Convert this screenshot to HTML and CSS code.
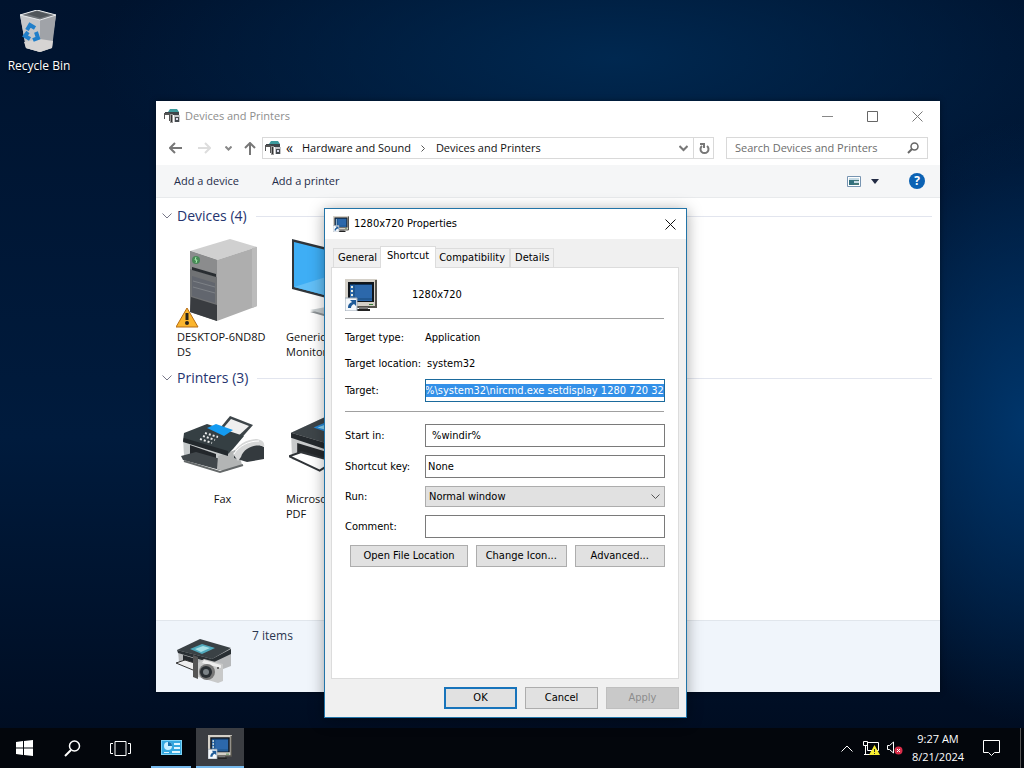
FILE: index.html
```html
<!DOCTYPE html>
<html lang="en">
<head>
<meta charset="utf-8">
<title>Devices and Printers</title>
<link rel="stylesheet" href="styles.css">
</head>
<body>
<svg class="defs" aria-hidden="true">
  <symbol id="devices" viewBox="0 0 16 14">
    <path d="M4 3 6 0h7l2 3z" fill="#3c9a9d"/><path d="M1 3h14v3H1z" fill="#3d4449"/><path d="M0 4h6v8H5V6H1v4H0z" fill="#555"/><path d="M6 5h3v9H6z" fill="#9a9a9a"/><path d="M7 6h1v7H7z" fill="#333"/><path d="M10 6h6v7h-6z" fill="#c4c6c8"/><path d="M11 8h4v5h-4z" fill="#454b50"/><path d="M12 9h2v2h-2z" fill="#dde"/>
  </symbol>
  <symbol id="console" viewBox="0 0 32 32">
    <path d="M0 0h32v28H0z" fill="#d4d0c8"/><path d="M31 1v27H1" fill="none" stroke="#55534d" stroke-width="2"/><path d="M3 3h26v20H3z" fill="#10151b"/><path d="M5 5h22v17H5z" fill="#2c68ab"/><path d="M5 5h22v1H5z" fill="#0c3058"/><path d="M6 7h2v2H6zm0 4h2v2H6zm0 4h2v2H6zm0 4h2v2H6z" fill="#e8eee2"/><path d="M9 5v15h18" fill="none" stroke="#174979"/><path d="M24 25h4v1h-4z" fill="#388037"/><path d="M14 28h9v2h-9z" fill="#777"/><path d="M11 30h14v2H11z" fill="#222"/>
    <path d="M0 19h12v13H0z" fill="#f5f8fb" stroke="#9aa7b3"/><path d="M3 29c0-4 2-5 4-6l-2-2h6v6l-2-2c-2 1-3 2-3 4z" fill="#205b98"/>
  </symbol>
  <symbol id="printer" viewBox="0 0 84 64">
    <path d="M2 19 39 2l43 10v27L47 59 3 45z" fill="#c8cacb"/><path d="M2 19 39 2l43 10-36 20z" fill="#3e4549"/><path d="m24 14 16-7 25 5-18 10z" fill="#288bd9"/><path d="m28 14 13-5 13 3-15 5z" fill="#8ed7f5"/><path d="m46 32 36-20v8L47 39 2 24v-5z" fill="#24292d"/><path d="m8 29 30 9v10L8 39z" fill="#25282b"/><path d="m0 42 12-4 32 9-14 9z" fill="#fff" stroke="#303438" stroke-width="2"/>
  </symbol>
</svg>

<main class="desktop">
  <a class="desktop-icon" href="#">
    <svg width="40" height="44" viewBox="0 0 40 44" aria-hidden="true">
      <path d="m1 5 17-5 19 5-5 33-11 4L7 38z" fill="#b6bac0"/><path d="m1 5 20 4v33L7 38z" fill="#c4c6c9"/><path d="m21 9 16-4-4 33-12 4z" fill="#a0a3a8"/><path d="m1 5 17-5 19 5-16 5z" fill="#70757a" stroke="#e8ebed"/><path d="m8 4 10-3 13 4-10 3z" fill="#50565b"/><path d="m5 32 16-3 13 2-1 7-12 4-14-4z" fill="#d6d4d3"/>
      <g fill="none" stroke="#207fca" stroke-width="4"><path d="m8 20 3-5 5 3"/><path d="m17 22 2 6-5 2"/><path d="m11 29-5-3 3-4"/></g>
    </svg>
    <span>Recycle Bin</span>
  </a>

  <section class="explorer" aria-label="Devices and Printers">
    <header class="ex-title">
      <svg width="16" height="14" aria-hidden="true"><use href="#devices"/></svg>
      <span>Devices and Printers</span>
      <div class="ex-controls">
        <button aria-label="Minimize"><svg width="11" height="11"><path d="M0 5.5h11" stroke="#888"/></svg></button>
        <button aria-label="Maximize"><svg width="11" height="11"><path d="M.5.5h10v10H.5z" fill="none" stroke="#666"/></svg></button>
        <button aria-label="Close"><svg width="11" height="11"><path d="m.5.5 10 10m0-10-10 10" stroke="#777"/></svg></button>
      </div>
    </header>
    <nav class="ex-nav">
      <button aria-label="Back"><svg width="13" height="12"><path d="M1 6h12M6 1 1 6l5 5" fill="none" stroke="#777" stroke-width="2"/></svg></button>
      <button aria-label="Forward"><svg width="13" height="12"><path d="M0 6h12M7 1l5 5-5 5" fill="none" stroke="#ddd" stroke-width="2"/></svg></button>
      <button class="recent" aria-label="Recent locations"><svg width="7" height="5"><path d="m.5.5 3 3 3-3" fill="none" stroke="#888" stroke-width="2"/></svg></button>
      <button aria-label="Up"><svg width="12" height="13"><path d="M6 13V1M1 6l5-5 5 5" fill="none" stroke="#777" stroke-width="2"/></svg></button>
      <div class="address">
        <svg width="16" height="14" aria-hidden="true"><use href="#devices"/></svg>
        <span class="sep">«</span>
        <a href="#">Hardware and Sound</a>
        <svg width="5" height="7" aria-hidden="true"><path d="m.5.5 3 3-3 3" fill="none" stroke="#555"/></svg>
        <a href="#">Devices and Printers</a>
        <button class="drop" aria-label="Previous locations"><svg width="9" height="7"><path d="m.5 1 4 4 4-4" fill="none" stroke="#777" stroke-width="2"/></svg></button>
        <button class="refresh" aria-label="Refresh"><svg width="12" height="13"><path d="M4 4a4 4 0 1 0 5 0M2 2h4v4" fill="none" stroke="#777" stroke-width="2"/></svg></button>
      </div>
      <label class="search"><input type="search" placeholder="Search Devices and Printers" aria-label="Search Devices and Printers"><svg width="12" height="12" aria-hidden="true"><circle cx="7.500" cy="4.500" r="3.500" fill="none" stroke="#666" stroke-width="1.500"/><path d="m5 7-4 4" stroke="#666" stroke-width="2"/></svg></label>
    </nav>
    <div class="ex-tools">
      <button>Add a device</button>
      <button>Add a printer</button>
      <button class="view" aria-label="View"><svg width="14" height="11"><path d="M.5.5h13v10H.5z" fill="#fff" stroke="#7794b1"/><path d="M2 2h10v7H2z" fill="#c6dbe6"/><path d="M2 4h5v5H2z" fill="#326f7c"/><path d="M7 4h5v1H7zm0 3h5v2H7z" fill="#477"/></svg></button>
      <button class="view-drop" aria-label="More view options"><svg width="8" height="5"><path d="M0 0h8L4 5z" fill="#222b44"/></svg></button>
      <button class="help" aria-label="Help">?</button>
    </div>
    <div class="ex-content">
      <section>
        <h2><svg width="10" height="6" aria-hidden="true"><path d="m.5.5 4.500 4.500L9.500.5" fill="none" stroke="#778"/></svg>Devices (4)</h2>
        <ul class="items">
          <li>
            <div class="pic">
              <svg width="94" height="92" viewBox="0 0 94 92" aria-hidden="true">
                <path d="m14 12 40-12 27 8-40 13z" fill="#d0d0d0"/><path d="m41 21 40-13v59L41 82z" fill="#aeaeae"/><path d="m76 9 5-1v59l-5 2z" fill="#bbb"/><path d="m14 12 27 9v61l-27-9z" fill="#707274"/><path d="m14 12 27 9v17l-27-8z" fill="#8b8c8d"/><path d="m16 28 24 7v3l-24-7z" fill="#292d31"/><path d="m16 37 23 7v20l-23-7z" fill="#62666e"/><path d="m15 58 26 8v16l-27-9z" fill="#393c40"/><path d="m17 42 22 6m-22 0 22 6" stroke="#7e8287"/><circle cx="20" cy="21" r="4" fill="#488957"/><path d="m20 18-1 3h2l-1 3" stroke="#a3efaa" fill="none"/>
                <path d="M11 69 22 88H0z" fill="#fbb52d" stroke="#b66c13" stroke-linejoin="round"/><path d="M11 74v7" stroke="#27221b" stroke-width="3"/><circle cx="11" cy="84" r="2" fill="#27221b"/>
              </svg>
            </div>
            <span class="name">DESKTOP-6ND8D<br>DS</span>
          </li>
          <li>
            <div class="pic">
              <svg width="94" height="92" viewBox="0 0 94 92" aria-hidden="true"><path d="m7 0 84 21v51L7 50z" fill="#30353a"/><path d="m9 3 80 20v46L9 48z" fill="#3eaef5"/><path d="m9 48 80-25v46z" fill="#62bff7"/><path d="m25 73 32-6 24 8-28 6z" fill="#8c9295"/><path d="m25 71 32-6 24 8-28 6z" fill="#c7cdcf"/></svg>
            </div>
            <span class="name">Generic<br>Monitor</span>
          </li>
        </ul>
      </section>
      <section>
        <h2><svg width="10" height="6" aria-hidden="true"><path d="m.5.5 4.500 4.500L9.500.5" fill="none" stroke="#778"/></svg>Printers (3)</h2>
        <ul class="items">
          <li>
            <div class="pic">
              <svg width="94" height="92" viewBox="0 0 94 92" aria-hidden="true">
                <path d="m40 32 14-17 23 9-15 17z" fill="#3d4549"/><path d="m44 31 11-13 18 7-14 13z" fill="#efefef"/><path d="m7 37 45 14v19L8 54z" fill="#c6cacb"/><path d="m14 44 26 9v12l-26-8z" fill="#23272b"/><path d="m5 55 15-4 35 10-11 8-37-10z" fill="#41474b"/><path d="m42 55 20-7 4 16-19 6-6-2z" fill="#b3b5b5"/><path d="m8 32 23-9 37 12-11 13-5 5L7 40z" fill="#353f43"/><path d="m8 37 44 13v5L7 41z" fill="#23292d"/><path d="m31 27 9-4 17 6-9 6z" fill="#149bf1"/>
                <path d="m29 32 13 4m-15-1 12 4m-15-1 12 4" stroke="#ebeceb" stroke-width="2" stroke-dasharray="2 2"/><path d="m58 50 24-7 6 3v12l-17 3-13-4z" fill="#343a3e"/><path d="M57 53c4-9 14-15 24-15 6 1 8 4 7 8-6-4-20 0-23 10l-3 4z" fill="#d6d7d7"/><path d="M58 53c5-8 14-13 25-13" fill="none" stroke="#fff"/><path d="m8 60 36 11 23-7" fill="none" stroke="#65696a" stroke-width="2"/>
              </svg>
            </div>
            <span>Fax</span>
          </li>
          <li>
            <div class="pic"><svg class="office-printer" width="86" height="66" aria-hidden="true"><use href="#printer"/></svg></div>
            <span class="name">Microsoft<br>PDF</span>
          </li>
        </ul>
      </section>
    </div>
    <footer class="ex-status">
      <svg width="58" height="46" viewBox="0 0 58 46" aria-hidden="true"><path d="m2 12 22-10 31 9v17L34 36 3 25z" fill="#b6b8ba"/><path d="M1 12 24 1l31 9-19 11z" fill="#3a4145"/><path d="m14 11 12-5 13 4-13 6z" fill="#51aabd"/><path d="m19 11 8-3 7 2-9 4z" fill="#a7e1e7"/><path d="m1 12 35 9 19-10v5l-19 9L2 15z" fill="#292f33"/><path d="m7 17 13 4v7L7 23z" fill="#25292d"/><path d="m0 25 9-3 16 5-8 5z" fill="#eee" stroke="#333"/><path d="m17 17 5 2v22l-5-2z" fill="#555"/><path d="m22 25 6-4 19 5v17l-5 2-20-6z" fill="#c8c9c9"/><path d="m28 22 17 5v3l-19-5z" fill="#eee"/><circle cx="31" cy="34" r="8" fill="#777"/><circle cx="30" cy="34" r="6" fill="#292e32"/><circle cx="30" cy="34" r="3" fill="#7b8286"/><circle cx="42" cy="30" r="1" fill="#444"/></svg>
      <span>7 items</span>
    </footer>
  </section>

  <form class="dialog" aria-label="1280x720 Properties" onsubmit="return false">
    <header class="dlg-title">
      <svg width="16" height="16" aria-hidden="true"><use href="#console"/></svg>
      <span>1280x720 Properties</span>
      <button type="button" aria-label="Close"><svg width="11" height="11"><path d="m.5.5 10 10m0-10-10 10" stroke="#111"/></svg></button>
    </header>
    <div class="dlg-body">
      <div class="tabs" role="tablist">
        <button type="button" role="tab">General</button>
        <button type="button" role="tab" class="active" aria-selected="true">Shortcut</button>
        <button type="button" role="tab">Compatibility</button>
        <button type="button" role="tab">Details</button>
      </div>
      <div class="panel" role="tabpanel">
        <div class="identity"><svg width="32" height="32" aria-hidden="true"><use href="#console"/></svg><span>1280x720</span></div>
        <hr>
        <div class="facts">
          <span>Target type:</span><span>Application</span>
          <span>Target location:</span><span class="indent">system32</span>
          <label for="target">Target:</label><input id="target" class="target" value="%\system32\nircmd.exe setdisplay 1280 720 32" spellcheck="false">
        </div>
        <hr>
        <div class="fields">
          <label for="start">Start in:</label><input id="start" class="start" value="%windir%" spellcheck="false">
          <label for="key">Shortcut key:</label><input id="key" value="None">
          <label for="run">Run:</label>
          <div class="select"><select id="run"><option>Normal window</option><option>Minimized</option><option>Maximized</option></select><svg width="9" height="6" aria-hidden="true"><path d="m.5.5 4 4 4-4" fill="none" stroke="#555"/></svg></div>
          <label for="comment">Comment:</label><input id="comment">
        </div>
        <div class="actions"><button type="button" class="wide">Open File Location</button><button type="button">Change Icon...</button><button type="button">Advanced...</button></div>
      </div>
      <div class="dlg-buttons"><button class="default">OK</button><button type="button">Cancel</button><button type="button" disabled>Apply</button></div>
    </div>
  </form>
</main>

<footer class="taskbar">
  <button aria-label="Start"><svg width="17" height="16"><path d="m0 2 7-1v6.500H0zM8 1l9-1v7.500H8zM0 8.500h7V15l-7-1zm8 0h9V16l-9-1z" fill="#fff"/></svg></button>
  <button aria-label="Search"><svg width="17" height="17"><circle cx="10.500" cy="6" r="5" fill="none" stroke="#fff" stroke-width="1.500"/><path d="M7 10 1 16" stroke="#fff" stroke-width="2"/></svg></button>
  <button aria-label="Task view"><svg width="21" height="15"><path d="M5 .5h11v14H5zM3 2.500H.5v10H3m15-10h2.500v10H18" fill="none" stroke="#fff"/></svg></button>
  <button class="running" aria-label="Control Panel"><svg width="21" height="15"><path d="M0 0h21v15H0z" fill="#7dd2f5"/><path d="M1 1h19v13H1z" fill="#35a7df"/><circle cx="7" cy="6" r="4" fill="#c8efff"/><path d="M7 6V2a4 4 0 0 1 4 4z" fill="#1670ac"/><path d="M13 3h6v2h-6zm0 4h6v2h-6zM3 12h5v1H3zm8-1h8v2h-8z" fill="#dff5ff"/></svg></button>
  <button class="current" aria-label="1280x720 Properties"><svg width="24" height="24"><use href="#console"/></svg></button>
  <div class="tray">
    <button aria-label="Show hidden icons"><svg width="12" height="7"><path d="m.5 6.500 5.500-5.500 5.500 5.500" fill="none" stroke="#fff"/></svg></button>
    <button aria-label="Network"><svg width="17" height="15"><path d="M4.500 1.500h11v8h-11zM.5.5h4v4h-4zM2.500 5v8M1 13.500h8" fill="none" stroke="#fff"/><path d="m11.500 4 5.500 10H6z" fill="#f8ee31"/><path d="M11.500 8v3m0 1v1" stroke="#333"/></svg></button>
    <button aria-label="Volume muted"><svg width="16" height="14"><path d="M.5 4.500h2L6.500 1v11l-4-3.500h-2z" fill="none" stroke="#fff"/><circle cx="11.500" cy="9.500" r="4" fill="#d92d49"/><path d="m10 8 3 3m0-3-3 3" stroke="#fff"/></svg></button>
    <time>9:27 AM<br>8/21/2024</time>
    <button class="notify" aria-label="Notifications"><svg width="17" height="16"><path d="M.5.5h16v12h-5l-3 3-3-3h-5z" fill="none" stroke="#fff"/></svg></button>
    <button class="peek" aria-label="Show desktop"></button>
  </div>
</footer>
<script>
const target = document.getElementById('target');
target.focus();
target.select();
target.scrollLeft = target.scrollWidth;
</script>
</body>
</html>
```

FILE: styles.css
```css
* { box-sizing: border-box; }
body {
  margin: 0;
  height: 100vh;
  display: flex;
  flex-direction: column;
  overflow: hidden;
  font: 11px/16px "Open Sans", "Noto Sans", sans-serif;
  color: #111;
}
button, input, select { font: inherit; color: inherit; margin: 0; border-radius: 0; }
button { border: 0; background: none; padding: 0; white-space: nowrap; }
button svg, .ex-title svg, .dlg-title svg { display: block; }
a { color: inherit; text-decoration: none; }
.defs { position: absolute; width: 0; height: 0; }

.desktop {
  flex: 1;
  position: relative;
  background:
    radial-gradient(ellipse 180px 300px at 100% 58%, #00356a 0%, rgba(0, 45, 90, 0) 100%),
    radial-gradient(ellipse 520px 170px at 60% 8%, #002850 0%, rgba(0, 35, 75, 0) 100%),
    linear-gradient(180deg, #00132e 0%, #001b3d 60%, #000d22 100%);
}
.desktop-icon {
  position: absolute;
  left: 2px;
  top: 10px;
  width: 74px;
  display: flex;
  flex-direction: column;
  align-items: center;
  gap: 4px;
  color: #fff;
  font-size: 12px;
  text-shadow: 0 1px 2px #000;
}

.explorer {
  position: absolute;
  left: 156px;
  right: 84px;
  top: 101px;
  bottom: 36px;
  display: flex;
  flex-direction: column;
  background: #fff;
  box-shadow: 0 0 6px rgba(0, 0, 0, .4);
  overflow: hidden;
}
.ex-title { display: flex; align-items: center; height: 30px; padding-left: 8px; gap: 5px; color: #8d8d8d; }
.ex-controls { display: flex; margin-left: auto; }
.ex-controls button { width: 45px; height: 28px; display: grid; place-items: center; }
.ex-nav { display: flex; align-items: center; height: 34px; padding: 0 12px; }
.ex-nav > button { width: 28px; height: 22px; display: grid; place-items: center; }
.ex-nav > button:first-child { width: 14px; margin-right: 8px; }
.ex-nav > .recent { width: 20px; }
.ex-nav > .recent + button { width: 24px; }
.address { flex: 1; display: flex; align-items: center; gap: 10px; height: 22px; border: 1px solid #d9d9d9; padding-left: 2px; }
.address .sep { margin: 0 -1px 0 -5px; font-size: 14px; }
.address button { height: 20px; display: grid; place-items: center; }
.drop { width: 20px; margin-left: auto; }
.address .refresh { width: 20px; border-left: 1px solid #d9d9d9; margin-left: -10px; }
.search { display: flex; align-items: center; width: 202px; height: 22px; margin-left: 12px; border: 1px solid #d9d9d9; padding: 0 8px; }
.search input { flex: 1; min-width: 0; border: 0; padding: 0; outline: 0; background: none; }
.search input::placeholder { color: #6d6d6d; }
.ex-tools { display: flex; align-items: center; height: 33px; padding: 0 15px 0 18px; gap: 33px; background: #f5f6f7; border-bottom: 1px solid #e8eaec; color: #1e2c49; }
.view { margin-left: auto; }
.view-drop { margin-left: -23px; }
.help { width: 16px; height: 16px; border-radius: 50%; background: #0b62b4; color: #fff; font-size: 12px; font-weight: 700; margin-left: -3px; }
.ex-content { flex: 1; min-height: 0; padding: 7px 8px 0 6px; }
.ex-content h2 { display: flex; align-items: center; gap: 5px; margin: 0; font-size: 14px; line-height: 22px; font-weight: 400; color: #25346f; }
.ex-content h2::after { content: ""; flex: 1; height: 1px; margin-left: 4px; background: #e2e5ee; }
.items { display: flex; margin: 0; padding: 12px 0 0 6px; list-style: none; height: 140px; }
.items li { width: 109px; display: flex; flex-direction: column; align-items: center; line-height: 15px; }
.name { width: 91px; }
.pic { height: 90px; }
.pic svg { display: block; }
.pic .office-printer { margin-top: 12px; }
.ex-status { display: flex; height: 72px; padding: 7px 20px; gap: 18px; background: #f0f5fb; border-top: 1px solid #e1e6ec; color: #2b3550; font-size: 12px; }
.ex-status svg { margin-top: 10px; }

.dialog {
  position: absolute;
  left: 324px;
  top: 208px;
  width: 363px;
  border: 1px solid #2274a8;
  background: #fff;
  box-shadow: 0 2px 14px rgba(0, 0, 0, .35);
  font: 11px/14px "DejaVu Sans Condensed", "DejaVu Sans", sans-serif;
  color: #000;
}
.dlg-title { display: flex; align-items: center; gap: 5px; height: 30px; padding: 0 10px 0 8px; }
.dlg-title button { margin-left: auto; }
.dlg-body { background: #f0f0f0; padding: 7px 7px 8px 6px; }
.tabs { display: flex; align-items: flex-end; padding-left: 2px; height: 21px; }
.tabs button { height: 19px; padding: 0 4px; border: 1px solid #dcdcdc; border-bottom: 0; }
.tabs .active { height: 22px; padding: 0 6px 3px; background: #fff; margin: 0 -2px -1px; position: relative; }
.panel { min-height: 412px; padding: 11px 13px; background: #fff; border: 1px solid #dcdcdc; }
.identity { display: flex; align-items: center; gap: 35px; }
.panel hr { height: 1px; margin: 7px 1px 8px 0; border: 0; background: #a0a0a0; }
.facts, .fields { display: grid; grid-template-columns: 80px 1fr; align-items: center; grid-auto-rows: minmax(22px, auto); row-gap: 4px; white-space: nowrap; }
.panel .facts + hr { margin: 9px 1px 12px 0; }
.indent { padding-left: 2px; }
.fields { row-gap: 8px; grid-auto-rows: auto; }
.panel input { width: 100%; height: 23px; padding: 0 2px; border: 1px solid #7a7a7a; background: #fff; outline: 0; }
.panel .start { padding-left: 6px; }
.panel .target { border-color: #1b6a9c; padding: 0; }
.target::selection { background: #3390e8; color: #fff; }
.select { display: grid; align-items: center; }
.select > * { grid-area: 1 / 1; }
.select select { appearance: none; width: 100%; height: 21px; padding: 0 3px; border: 1px solid #adadad; background: #e1e1e1; }
.select svg { justify-self: end; margin-right: 5px; pointer-events: none; }
.actions { display: flex; gap: 8px; margin: 7px 0 0 5px; }
.actions button, .dlg-buttons button { height: 22px; border: 1px solid #adadad; background: #e1e1e1; }
.actions button { flex: 90; }
.actions .wide { flex: 118; }
.dlg-buttons { display: flex; justify-content: flex-end; gap: 8px; margin-top: 8px; }
.dlg-buttons button { width: 73px; }
.dlg-buttons .default { border: 2px solid #1874bb; }
.dlg-buttons button:disabled { background: #c9c9c9; border-color: #bfbfbf; color: #8c8c8c; }

.taskbar { display: flex; height: 40px; background: #03060c; color: #fff; }
.taskbar button { width: 48px; display: grid; place-items: center; }
.taskbar .running { width: 40px; margin: 0 5px 0 7px; border-bottom: 2px solid #76b9ed; }
.taskbar .current { background: #3b3d42; border-bottom: 2px solid #76b9ed; }
.tray { display: flex; align-items: center; margin-left: auto; }
.tray button { width: 24px; height: 40px; }
.tray time { width: 62px; margin-right: 6px; text-align: center; line-height: 18px; }
.tray .notify { width: 32px; margin-right: 13px; }
.tray .peek { width: 4px; border-left: 1px solid #555; }
```
